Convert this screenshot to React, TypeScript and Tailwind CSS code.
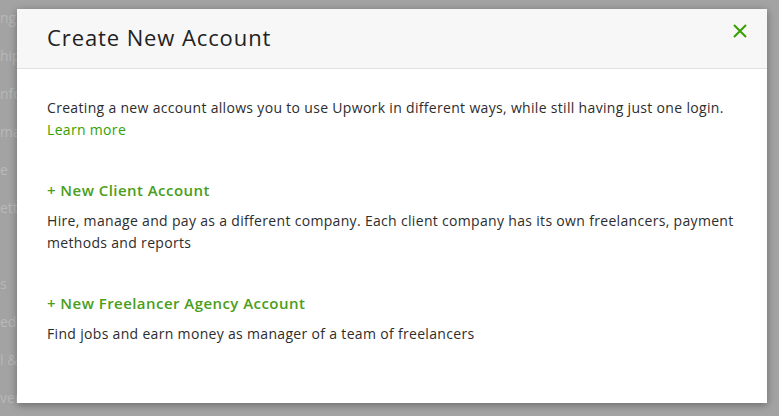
export default function App() {
  const bgWords = ["ngs", "hip", "nfo", "ma", "e", "etti", "", "s", "ed t", "l &", "ver"];

  return (
    <div
      className="relative h-[416px] w-[779px] overflow-hidden bg-[#a3a3a3]"
      style={{ fontFamily: "'Open Sans', 'Liberation Sans', sans-serif" }}
    >
      {/* dimmed page behind the modal */}
      <div className="flex flex-col gap-[22px] pt-[10px] text-[14px] text-[#b8b8b8]">
        {bgWords.map((w, i) => (
          <div key={i} className="h-[16px] leading-[16px]">
            {w}
          </div>
        ))}
      </div>

      <div className="absolute left-[17px] top-[9px] h-[394px] w-[750px] bg-white shadow-[0_2px_8px_rgba(0,0,0,0.35)]">
        <div className="flex h-[60px] items-center justify-between border-b border-[#e0e0e0] bg-[#f7f7f7] pl-[30px] pr-[19px]">
          <h2 className="mb-[3px] text-[22px] font-normal tracking-[0.9px] text-[#222]">Create New Account</h2>
          <svg width="16" height="16" viewBox="0 0 16 16" className="mb-[16px]">
            <path d="M2 2L14 14M14 2L2 14" stroke="#37a000" strokeWidth="2" />
          </svg>
        </div>

        <div className="px-[30px] pt-[28px] text-[14px] leading-[22px] tracking-[0.32px] text-[#2d2d2d]">
          <p>
            Creating a new account allows you to use Upwork in different ways, while still having just one login.
            <br />
            <a className="font-medium text-[#37a000]">Learn more</a>
          </p>

          <div className="mt-[38px]">
            <a className="text-[15px] font-semibold tracking-[0.45px] text-[#4a9e1a]">+ New Client Account</a>
            <p className="mt-[8px]">
              Hire, manage and pay as a different company. Each client company has its own freelancers, payment methods and reports
            </p>
          </div>

          <div className="mt-[38px]">
            <a className="text-[15px] font-semibold tracking-[0.45px] text-[#4a9e1a]">+ New Freelancer Agency Account</a>
            <p className="mt-[8px]">Find jobs and earn money as manager of a team of freelancers</p>
          </div>
        </div>
      </div>
    </div>
  );
}
